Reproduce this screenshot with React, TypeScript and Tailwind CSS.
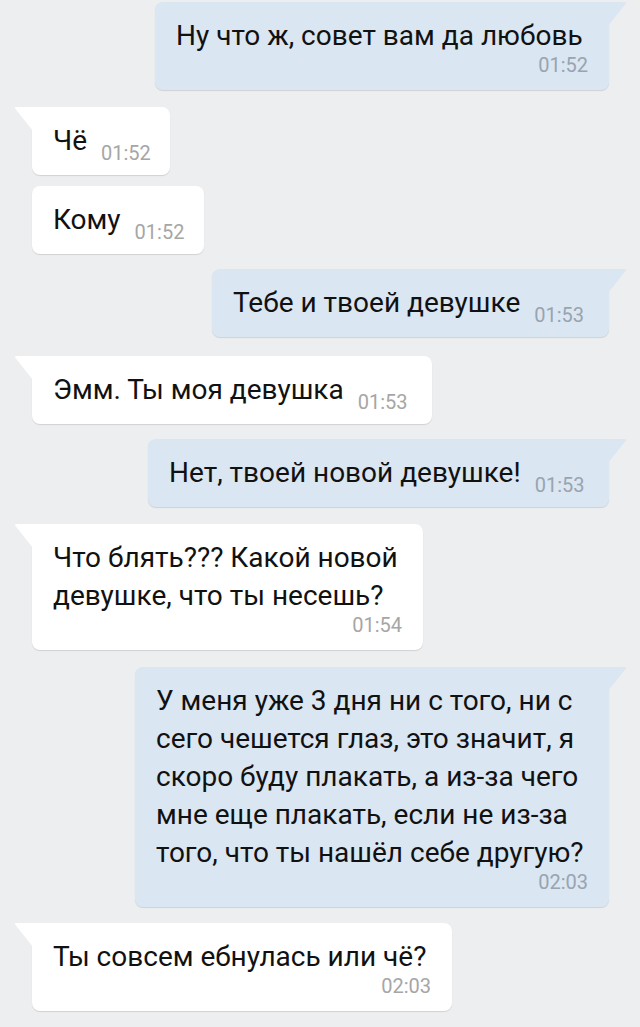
import React from 'react';

type Msg = {
  out: boolean;
  lines: string[];
  time: string;
  inline: boolean;
  tail: boolean;
  width: string;
  mt: string;
};

const messages: Msg[] = [
  { out: true, lines: ['Ну что ж, совет вам да любовь'], time: '01:52', inline: false, tail: true, width: 'w-[454px]', mt: 'mt-0' },
  { out: false, lines: ['Чё'], time: '01:52', inline: true, tail: true, width: 'w-[138px]', mt: 'mt-[17px]' },
  { out: false, lines: ['Кому'], time: '01:52', inline: true, tail: false, width: 'w-[172px]', mt: 'mt-[11px]' },
  { out: true, lines: ['Тебе и твоей девушке'], time: '01:53', inline: true, tail: true, width: 'w-[397px]', mt: 'mt-[15px]' },
  { out: false, lines: ['Эмм. Ты моя девушка'], time: '01:53', inline: true, tail: true, width: 'w-[400px]', mt: 'mt-[19px]' },
  { out: true, lines: ['Нет, твоей новой девушке!'], time: '01:53', inline: true, tail: true, width: 'w-[461px]', mt: 'mt-[15px]' },
  { out: false, lines: ['Что блять??? Какой новой', 'девушке, что ты несешь?'], time: '01:54', inline: false, tail: true, width: 'w-[391px]', mt: 'mt-[17px]' },
  {
    out: true,
    lines: [
      'У меня уже 3 дня ни с того, ни с',
      'сего чешется глаз, это значит, я',
      'скоро буду плакать, а из-за чего',
      'мне еще плакать, если не из-за',
      'того, что ты нашёл себе другую?',
    ],
    time: '02:03',
    inline: false,
    tail: true,
    width: 'w-[474px]',
    mt: 'mt-[17px]',
  },
  { out: false, lines: ['Ты совсем ебнулась или чё?'], time: '02:03', inline: false, tail: true, width: 'w-[420px]', mt: 'mt-[16px]' },
];

const Tail: React.FC<{ out: boolean }> = ({ out }) =>
  out ? (
    <svg className="absolute top-0 -right-[18px]" width="19" height="24" viewBox="0 0 19 24">
      <path d="M0 0 H17 Q19 0 17.5 2 L0 24 Z" fill="#dae6f2" />
    </svg>
  ) : (
    <svg className="absolute top-0 -left-[18px]" width="19" height="24" viewBox="0 0 19 24">
      <path d="M19 0 H2 Q0 0 1.5 2 L19 24 Z" fill="#ffffff" />
    </svg>
  );

const Bubble: React.FC<{ m: Msg }> = ({ m }) => {
  const timeColor = m.out ? 'text-[#98a4b0]' : 'text-[#a6a6a6]';
  return (
    <div className={`flex ${m.out ? 'justify-end pr-[31px]' : 'justify-start pl-[32px]'} ${m.mt}`}>
      <div
        className={`relative ${m.width} px-[21px] pt-[15px] ${m.inline ? 'pb-[15px]' : 'pb-[14px]'} rounded-[8px] shadow-[0_1px_1px_rgba(0,0,0,0.12)] ${
          m.out ? 'bg-[#dae6f2]' : 'bg-white'
        } ${m.tail ? (m.out ? 'rounded-tr-none' : 'rounded-tl-none') : ''}`}
      >
        {m.tail && <Tail out={m.out} />}
        <div className="text-[28px] leading-[38px] text-[#111] whitespace-nowrap">
          {m.lines.map((l, i) => (
            <div key={i}>
              {l}
              {m.inline && (
                <span className={`inline-block ml-[14px] text-[20px] leading-none translate-y-[10px] ${timeColor}`}>
                  {m.time}
                </span>
              )}
            </div>
          ))}
        </div>
        {!m.inline && (
          <div className={`text-right text-[20px] leading-[22px] -mt-[1px] ${timeColor}`}>{m.time}</div>
        )}
      </div>
    </div>
  );
};

export default function App() {
  return (
    <div className="w-[640px] h-[1027px] overflow-hidden bg-[#edeef0] pt-[2px] font-['Roboto',sans-serif]">
      {messages.map((m, i) => (
        <Bubble key={i} m={m} />
      ))}
    </div>
  );
}
